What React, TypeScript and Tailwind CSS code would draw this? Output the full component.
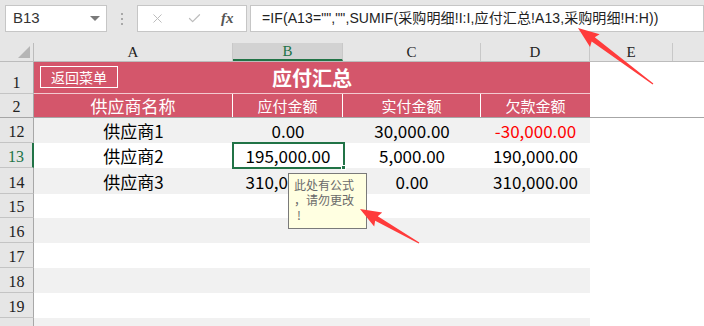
import React from 'react';
import { X, Check } from 'lucide-react';

const cjk = { fontFamily: "'Noto Sans CJK SC', 'Noto Sans', sans-serif" };
const serif = { fontFamily: "'Liberation Serif', 'DejaVu Serif', serif" };

const colWidths = [199, 110, 138, 109, 83];
const colLetters = ['A', 'B', 'C', 'D', 'E'];

interface DataRow {
  n: number;
  h: number;
  band: boolean;
  cells: string[];
}

const dataRows: DataRow[] = [
  { n: 12, h: 25, band: true, cells: ['供应商1', '0.00', '30,000.00', '-30,000.00'] },
  { n: 13, h: 25, band: false, cells: ['供应商2', '195,000.00', '5,000.00', '190,000.00'] },
  { n: 14, h: 26, band: true, cells: ['供应商3', '310,000.00', '0.00', '310,000.00'] },
  { n: 15, h: 24, band: false, cells: [] },
  { n: 16, h: 25, band: true, cells: [] },
  { n: 17, h: 25, band: false, cells: [] },
  { n: 18, h: 25, band: true, cells: [] },
  { n: 19, h: 25, band: false, cells: [] },
  { n: 20, h: 25, band: true, cells: [] },
];

// arrow polygon from tail to tip
const arrowPoints = (sx: number, sy: number, tx: number, ty: number) => {
  const len = Math.hypot(tx - sx, ty - sy);
  const dx = (tx - sx) / len;
  const dy = (ty - sy) / len;
  const nx = -dy;
  const ny = dx;
  const headLen = 19;
  const headHalf = 8;
  const bx = tx - dx * headLen;
  const by = ty - dy * headLen;
  const pts = [
    [sx + nx * 0.6, sy + ny * 0.6],
    [bx + nx * 2.6, by + ny * 2.6],
    [bx + nx * headHalf - dx * 2, by + ny * headHalf - dy * 2],
    [tx, ty],
    [bx - nx * headHalf - dx * 2, by - ny * headHalf - dy * 2],
    [bx - nx * 2.6, by - ny * 2.6],
    [sx - nx * 0.6, sy - ny * 0.6],
  ];
  return pts.map((p) => p.join(',')).join(' ');
};

const RowHead = ({ n, active, className = '' }: { n: number; active?: boolean; className?: string }) => (
  <div
    className={`w-[34px] shrink-0 flex items-end justify-center pb-[2px] bg-[#e6e6e6] border-b border-[#c4c4c4] text-[16px] leading-none ${
      active ? 'text-[#217346] border-r-2 border-r-[#217346] bg-[#d6d6d6]' : 'text-[#222] border-r border-r-[#a8a8a8]'
    } ${className}`}
    style={serif}
  >
    {n}
  </div>
);

export default function App() {
  return (
    <div className="relative w-[704px] h-[326px] overflow-hidden bg-white">
      {/* Formula bar */}
      <div className="h-[43px] bg-[#e6e6e6] flex items-start pt-[5px] pl-[5px]">
        <div className="w-[102px] h-[27px] bg-white border border-[#c6c6c6] flex items-center justify-between pl-[7px] pr-[6px]">
          <span className="text-[15px] text-[#333]" style={{ fontFamily: "'Liberation Sans', sans-serif" }}>B13</span>
          <span className="w-0 h-0 border-l-[5px] border-r-[5px] border-t-[5px] border-l-transparent border-r-transparent border-t-[#7a7a7a]" />
        </div>
        <div className="w-[30px] h-[27px] flex flex-col items-center justify-center gap-[3px]">
          <span className="w-[2px] h-[2px] bg-[#a8a8a8]" />
          <span className="w-[2px] h-[2px] bg-[#a8a8a8]" />
          <span className="w-[2px] h-[2px] bg-[#a8a8a8]" />
        </div>
        <div className="w-[110px] h-[27px] bg-white border border-[#c6c6c6] flex items-center pl-[12px]">
          <X size={15} strokeWidth={1.6} className="text-[#bdbdbd]" />
          <Check size={15} strokeWidth={2} className="text-[#bdbdbd] ml-[22px]" />
          <span className="ml-[19px] text-[15px] italic font-bold text-[#555]" style={serif}>fx</span>
        </div>
        <div className="flex-1 ml-[3px] h-[27px] bg-white border border-[#c6c6c6] flex items-center pl-[11px]">
          <span className="text-[14px] tracking-[0.1px] text-[#222] whitespace-nowrap" style={{ fontFamily: "'Liberation Sans', 'Noto Sans CJK SC', sans-serif" }}>
            =IF(A13="","",SUMIF(采购明细!I:I,应付汇总!A13,采购明细!H:H))
          </span>
        </div>
      </div>

      {/* Column headers */}
      <div className="flex h-[19px] bg-[#e6e6e6] border-b border-[#bcbcbc]">
        <div className="w-[34px] shrink-0 flex items-end justify-end pr-[3px] pb-[3px] border-r border-[#bcbcbc]">
          <svg width="12" height="12" viewBox="0 0 12 12">
            <polygon points="12,0 12,12 0,12" fill="#b5b5b5" />
          </svg>
        </div>
        {colWidths.map((w, i) => (
          <div
            key={i}
            className={`shrink-0 flex items-center justify-center text-[15px] leading-none border-r border-[#c8c8c8] ${
              i === 1 ? 'bg-[#d2d2d2] text-[#217346] border-b-2 border-b-[#217346]' : 'text-[#222]'
            }`}
            style={{ ...serif, width: w }}
          >
            {colLetters[i]}
          </div>
        ))}
        <div className="flex-1" />
      </div>

      {/* Row 1 */}
      <div className="flex h-[32px]">
        <RowHead n={1} />
        <div className="w-[556px] shrink-0 bg-[#d4566b] border-b border-[#f3c9d0] relative flex items-center justify-center" style={cjk}>
          <div className="absolute left-[6px] top-[4px] w-[78px] h-[22px] border border-white flex items-center justify-center text-white text-[14px] leading-none">
            返回菜单
          </div>
          <span className="text-white font-bold text-[20px] leading-none">应付汇总</span>
        </div>
        <div className="flex-1" />
      </div>

      {/* Row 2 */}
      <div className="flex h-[24px] border-b border-[#a6a6a6]">
        <RowHead n={2} className="border-b-0" />
        {['供应商名称', '应付金额', '实付金额', '欠款金额'].map((t, i) => (
          <div
            key={t}
            className={`shrink-0 bg-[#d4566b] flex items-center justify-center text-white leading-none ${
              i === 0 ? 'text-[17px]' : 'text-[15px]'
            } ${i < 3 ? 'border-r border-white' : ''}`}
            style={{ ...cjk, width: colWidths[i] }}
          >
            {t}
          </div>
        ))}
        <div className="flex-1" />
      </div>

      {/* Data rows */}
      {dataRows.map((r) => (
        <div key={r.n} className="flex" style={{ height: r.h }}>
          <RowHead n={r.n} active={r.n === 13} />
          {colWidths.slice(0, 4).map((w, i) => (
            <div
              key={i}
              className={`relative shrink-0 flex items-center justify-center text-[17px] leading-none ${
                r.band ? 'bg-[#f1f1f1]' : 'bg-white'
              } ${r.cells[i]?.startsWith('-') ? 'text-[#ff0000]' : 'text-black'} ${r.n === 13 && i === 1 ? 'z-10' : ''}`}
              style={{ ...cjk, width: w }}
            >
              {r.cells[i] ?? ''}
              {r.n === 13 && i === 1 && (
                <div className="absolute -left-[1px] -top-[1px] w-[113px] h-[27px] border-2 border-[#217346]">
                  <span className="absolute -right-[3px] -bottom-[3px] w-[5px] h-[5px] bg-[#217346] border border-white" />
                </div>
              )}
            </div>
          ))}
          <div className="flex-1 bg-white" />
        </div>
      ))}

      {/* Comment box */}
      <div
        className="absolute z-20 left-[288px] top-[173px] w-[79px] h-[56px] bg-[#ffffe1] border border-[#7a7a7a] pl-[5px] pt-[3px] text-[12px] leading-[15px]"
        style={cjk}
      >
        <div className="text-[#6a6a6a]">此处有公式</div>
        <div className="text-[#6a6a6a]">，请勿更改</div>
        <div className="text-[#6a6a6a] pl-[3px]">!</div>
      </div>

      {/* Annotation arrows */}
      <svg className="absolute z-30 left-0 top-0 pointer-events-none" width="704" height="326">
        <polygon points={arrowPoints(653, 84, 578, 28)} fill="#ff3b3b" />
        <polygon points={arrowPoints(419, 243, 360, 209)} fill="#ff3b3b" />
      </svg>
    </div>
  );
}
